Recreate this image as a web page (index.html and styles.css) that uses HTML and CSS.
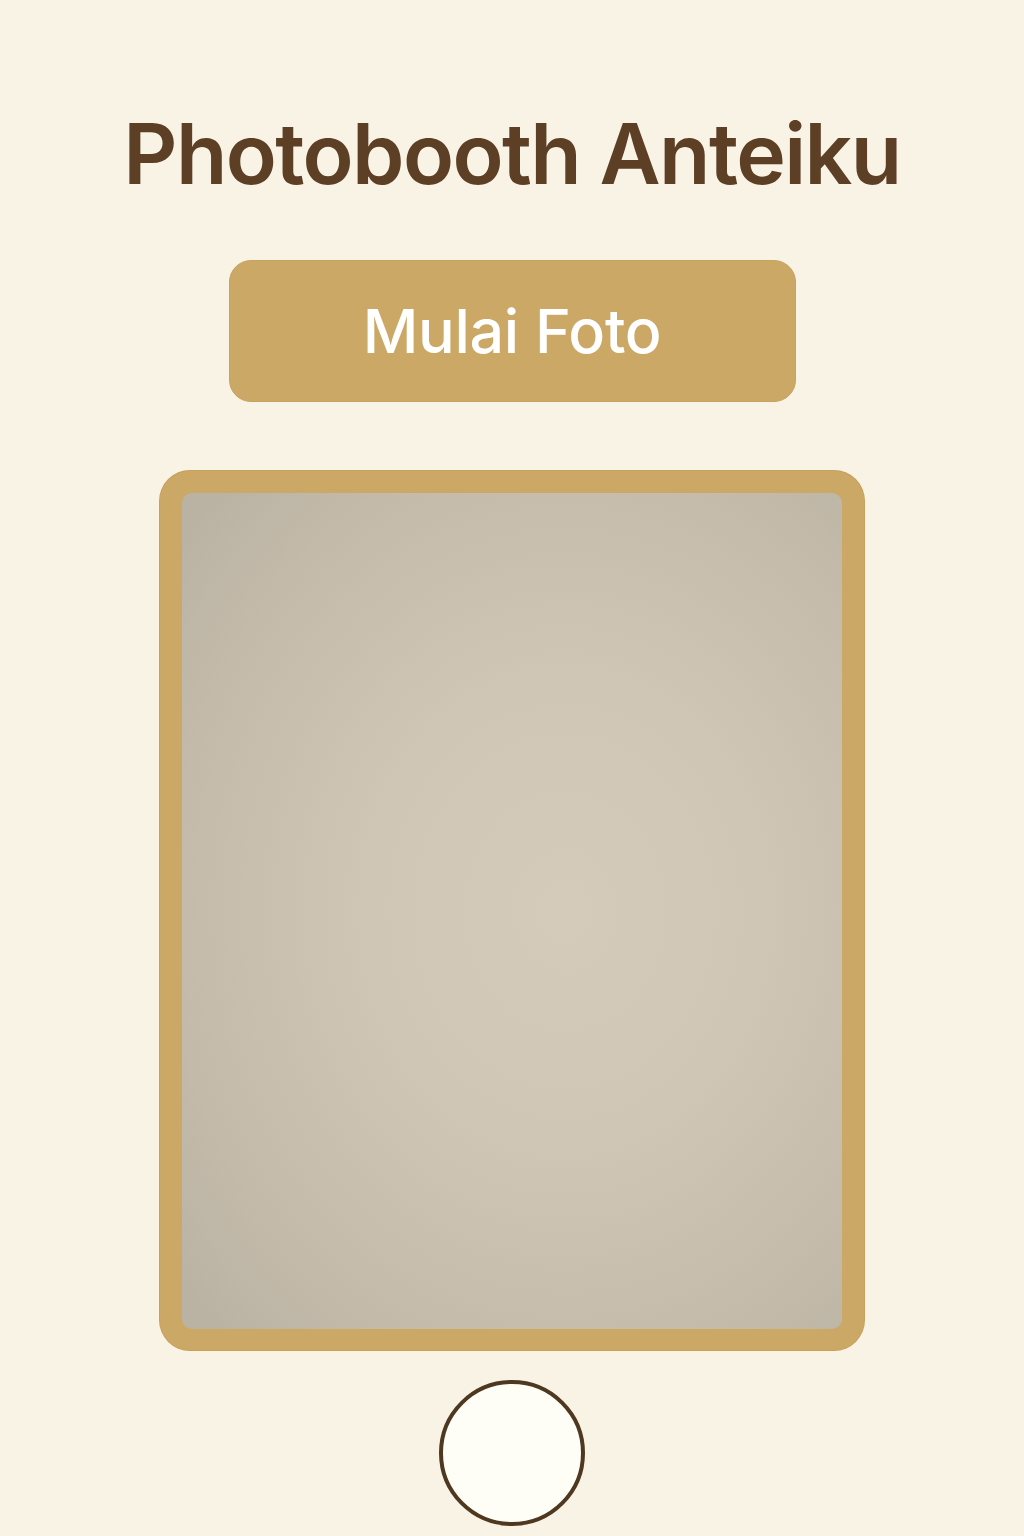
FILE: index.html
```html
<!DOCTYPE html>
<html lang="id">
<head>
<meta charset="utf-8">
<title>Photobooth Anteiku</title>
<link rel="stylesheet" href="styles.css">
</head>
<body>
<main class="page">
  <h1 class="title">Photobooth Anteiku</h1>
  <button class="start-btn" type="button">Mulai Foto</button>
  <div class="frame">
    <div class="preview"></div>
  </div>
  <button class="shutter" type="button" aria-label="Ambil foto"></button>
</main>
</body>
</html>
```
FILE: styles.css
```css
html, body {
  margin: 0;
  padding: 0;
  background: #f9f3e6;
}
body {
  font-family: Inter, "Noto Sans", "Liberation Sans", sans-serif;
}
.page {
  display: flex;
  flex-direction: column;
  align-items: center;
  padding-top: 112px;
  min-height: 1536px;
  box-sizing: border-box;
}
.title {
  margin: 0;
  font-size: 84px;
  line-height: 84px;
  font-weight: 600;
  color: #5c3f25;
  letter-spacing: -1.6px;
}
.start-btn {
  margin-top: 64px;
  width: 567px;
  height: 142px;
  border: 1px solid #c9a35e;
  border-radius: 22px;
  background: #cca866;
  color: #ffffff;
  font-family: inherit;
  font-size: 61px;
  font-weight: 500;
  letter-spacing: -0.3px;
  padding: 0;
  cursor: pointer;
}
.frame {
  margin-top: 69px;
  width: 704px;
  height: 879px;
  box-sizing: border-box;
  padding: 22px 22px 21px 22px;
  background: #cca866;
  border-radius: 30px;
  box-shadow: 0 0 0 1px #c9a05a;
}
.preview {
  width: 100%;
  height: 100%;
  border-radius: 10px;
  background: radial-gradient(ellipse 75% 70% at 58% 50%, #d4cbbb 0%, #cfc6b6 40%, #c3baa9 80%, #bab3a4 100%);
}
.shutter {
  margin-top: 30px;
  width: 146px;
  height: 146px;
  border-radius: 50%;
  border: 4px solid #4e3820;
  background: #fffef6;
  padding: 0;
  cursor: pointer;
}
```
